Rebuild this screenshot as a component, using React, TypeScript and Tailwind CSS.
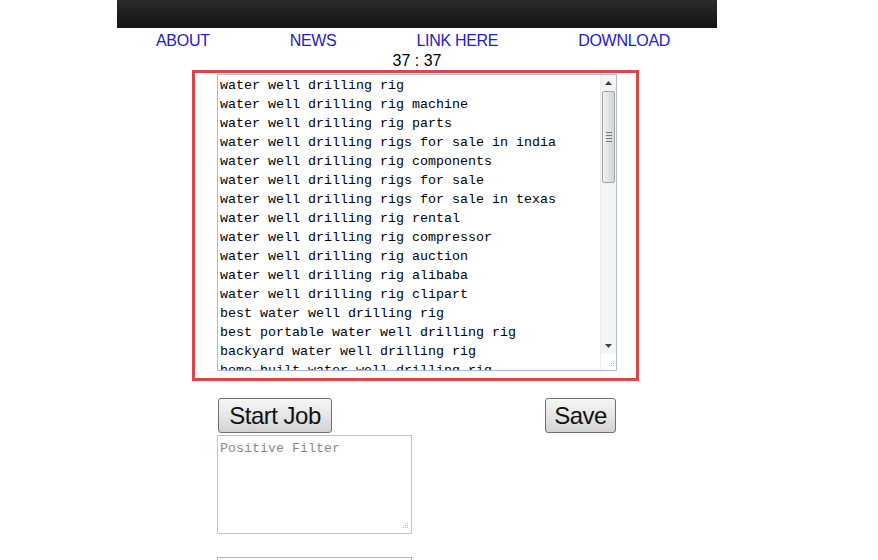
import React from 'react';

const keywords = [
  'water well drilling rig',
  'water well drilling rig machine',
  'water well drilling rig parts',
  'water well drilling rigs for sale in india',
  'water well drilling rig components',
  'water well drilling rigs for sale',
  'water well drilling rigs for sale in texas',
  'water well drilling rig rental',
  'water well drilling rig compressor',
  'water well drilling rig auction',
  'water well drilling rig alibaba',
  'water well drilling rig clipart',
  'best water well drilling rig',
  'best portable water well drilling rig',
  'backyard water well drilling rig',
  'home built water well drilling rig',
];

const navItems = ['ABOUT', 'NEWS', 'LINK HERE', 'DOWNLOAD'];

const Grip = () => (
  <svg width="10" height="10" viewBox="0 0 10 10" className="block">
    <g fill="#b8b8b8">
      <rect x="7" y="1" width="1" height="1" />
      <rect x="5" y="3" width="1" height="1" />
      <rect x="7" y="3" width="1" height="1" />
      <rect x="3" y="5" width="1" height="1" />
      <rect x="5" y="5" width="1" height="1" />
      <rect x="7" y="5" width="1" height="1" />
    </g>
  </svg>
);

const Scrollbar = () => (
  <div className="w-[16px] flex flex-col bg-[#f4f4f4] border-l border-[#ececec]">
    <div className="h-[16px] flex items-center justify-center">
      <svg width="7" height="4" viewBox="0 0 7 4"><path d="M0 4 L3.5 0 L7 4 Z" fill="#404040" /></svg>
    </div>
    <div className="mx-[1px] h-[92px] rounded-[2px] border border-[#a6a6a6] bg-gradient-to-r from-[#f2f2f2] via-[#e2e2e2] to-[#d4d4d4] flex items-center justify-center">
      <div className="flex flex-col gap-[2px]">
        <div className="w-[6px] h-[1px] bg-[#777]" />
        <div className="w-[6px] h-[1px] bg-[#777]" />
        <div className="w-[6px] h-[1px] bg-[#777]" />
        <div className="w-[6px] h-[1px] bg-[#777]" />
      </div>
    </div>
    <div className="flex-1" />
    <div className="h-[16px] flex items-center justify-center">
      <svg width="7" height="4" viewBox="0 0 7 4"><path d="M0 0 L3.5 4 L7 0 Z" fill="#404040" /></svg>
    </div>
    <div className="h-[16px] flex items-end justify-end bg-white">
      <Grip />
    </div>
  </div>
);

const btn =
  'h-[35px] rounded-[3px] border border-[#707070] bg-gradient-to-b from-[#f6f6f6] via-[#e6e6e6] to-[#d2d2d2] text-[24px] leading-none text-[#111] tracking-[-0.5px] font-["Liberation_Sans",Arial,sans-serif] flex items-center justify-center';

export default function App() {
  return (
    <div className="w-[878px] h-[560px] overflow-hidden bg-white font-['Liberation_Sans',Arial,sans-serif]">
      <div className="ml-[117px] w-[600px]">
        <div className="h-[28px] bg-gradient-to-b from-[#2c2c2c] via-[#1f1f1f] to-[#151515]" />
        <nav className="h-[23px] flex items-center pl-[39px] gap-[80px] pt-[2px] text-[16px] text-[#2222bb] tracking-[-0.3px]">
          {navItems.map((n) => (
            <a key={n} className="leading-none">{n}</a>
          ))}
        </nav>
        <div className="h-[19px] text-center text-[16px] leading-[19px] text-black">37 : 37</div>
      </div>

      <div className="ml-[192px] w-[447px] h-[311px] border-[3px] border-[#d9474b] pl-[22px] pt-[1px]">
        <div className="w-[400px] h-[297px] flex border border-[#a9bcd3] bg-white">
          <div className="flex-1 overflow-hidden pl-[2px] pt-[1px] font-['Liberation_Mono','Courier_New',monospace] text-[13.33px] leading-[19px] text-black whitespace-pre">
            {keywords.map((k) => (
              <div key={k}>{k}</div>
            ))}
          </div>
          <Scrollbar />
        </div>
      </div>

      <div className="ml-[218px] w-[398px] mt-[17px] flex justify-between">
        <button className={`${btn} w-[114px]`}>Start Job</button>
        <button className={`${btn} w-[71px]`}>Save</button>
      </div>

      <div className="ml-[217px] w-[195px] h-[99px] mt-[2px] border border-[#c4c4c4] relative">
        <div className="pl-[2px] pt-[3px] font-['Liberation_Mono','Courier_New',monospace] text-[13.33px] leading-[19px] text-[#8a8a8a]">
          Positive Filter
        </div>
        <div className="absolute right-[1px] bottom-[1px]"><Grip /></div>
      </div>

      <div className="ml-[217px] w-[195px] h-[40px] mt-[23px] border border-[#b8b8b8]" />
    </div>
  );
}
